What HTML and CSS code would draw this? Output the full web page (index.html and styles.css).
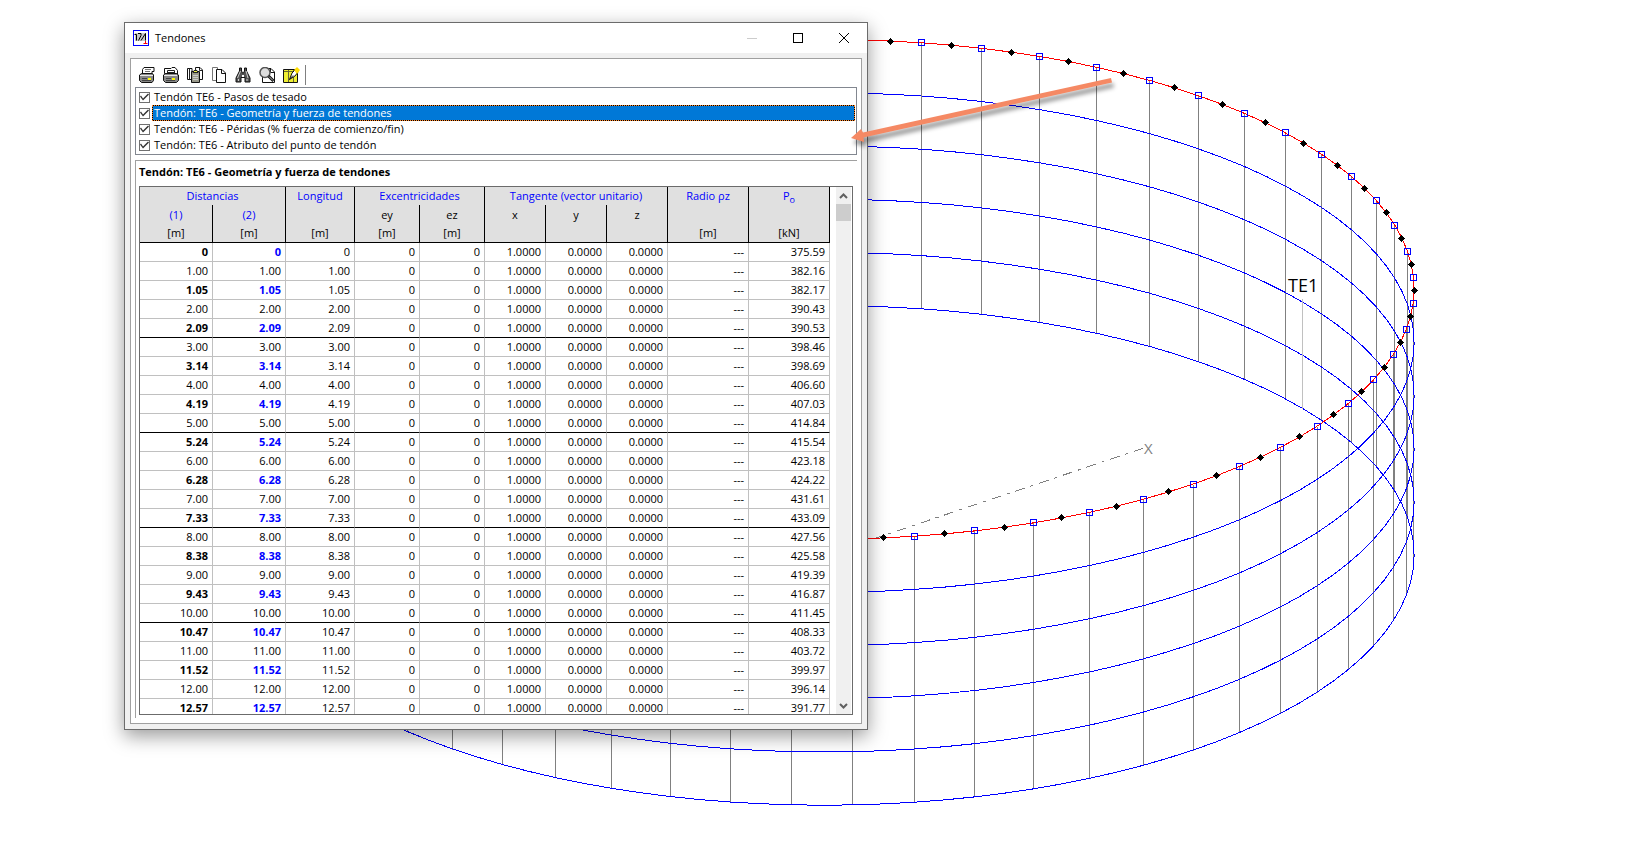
FILE: index.html
```
<!DOCTYPE html>
<html lang="es">
<head>
  <meta charset="UTF-8" />
  <meta name="viewport" content="width=device-width, initial-scale=1.0"/>
  <title>Tendones</title>
  <link rel="stylesheet" href="styles.css">
</head>
<body>
  <svg class="scene" role="img" aria-label="Modelo">
    <g id="posts" class="post"></g>
    <g id="rings" class="ring"></g>
    <line class="leader" x1="1302" y1="299" x2="1302" y2="409" />
    <line class="axis" x1="873" y1="539" x2="1147" y2="447" />
    <g id="tendon"></g>
    <text class="label" x="1288" y="292">TE1</text>
    <text class="axis-label" x="1144" y="454">X</text>
  </svg>

  <div class="window">
    <div class="titlebar">
      <svg width="16" height="16" viewBox="0 0 16 16">
        <rect x="0.5" y="0.5" width="15" height="15" fill="#fff" stroke="#00f" />
        <rect x="2" y="3" width="11" height="8" fill="#c8c8c8" />
        <path d="M1.500 4.500h2v6M5 3.500h3v2l-2.500 5M8 10.500L12.500 3.500v7" fill="none" stroke="#000" />
        <path d="M10.500 13.500h4M12.500 11v3" stroke="#f00" />
      </svg>
      <span class="title">Tendones</span>
      <button class="win-btn" aria-label="Minimizar"><svg width="10" height="10"><path d="M0 5.500h10" stroke="#ccc" /></svg></button>
      <button class="win-btn" aria-label="Maximizar"><svg width="10" height="10"><rect x="0.5" y="0.5" width="9" height="9" fill="none" stroke="#000" /></svg></button>
      <button class="win-btn" aria-label="Cerrar"><svg width="10" height="10"><path d="M0 0L10 10M10 0L0 10" stroke="#000" /></svg></button>
    </div>

    <div class="frame">
      <div class="toolbar">
        <button aria-label="Imprimir">
          <svg width="16" height="16" viewBox="0 0 16 16">
            <path d="M3.500 6.500V2.500L5 0.500H15V4.500H13V6.500z" fill="#fff" stroke="#111" />
            <path d="M6 2.500h6M6 4.500h5" stroke="#777" />
            <path d="M2.500 6.500H13.500L14.500 8V13.500L13 15.500H2.500L0.500 13.500V8z" fill="#888" stroke="#111" />
            <path d="M1 8.500h13" stroke="#e8e8e8" />
            <path d="M3 11.500h5M3 13.500h9" stroke="#444" />
            <path d="M9 11h3v2h-3z" fill="#ff0" />
          </svg>
        </button>
        <button aria-label="Imprimir tablas">
          <svg width="16" height="16" viewBox="0 0 16 16">
            <path d="M1.500 6.500V1.500H8L9 0.500H12L14.500 3.500V7z" fill="#fff" stroke="#111" />
            <path d="M4.500 6.500V3.500H11.500V6.500M5 5.500h6" fill="none" stroke="#222" />
            <path d="M2.500 6.500H13.500L15.500 8V13.500L13.500 15.500H2.500L0.500 13.500V8z" fill="#888" stroke="#111" />
            <path d="M1 8.500h13" stroke="#e8e8e8" />
            <path d="M3 11.500h5M3 13.500h9" stroke="#444" />
            <path d="M9 11h3v2h-3z" fill="#ff0" />
          </svg>
        </button>
        <button aria-label="Pegar">
          <svg width="16" height="16" viewBox="0 0 16 16">
            <path d="M0.500 1.500H5V12.500H0.500zM8.500 0.500H13L15.500 3V12.500H9z" fill="#fff" stroke="#111" />
            <path d="M2.500 1.500v11M12.500 1v2.500h3" fill="none" stroke="#222" />
            <path d="M4.500 4.500H12.500V15.500H4.500z" fill="#98988a" stroke="#111" />
            <path d="M6 5.500L7 3.500H10L11 5.500z" fill="#ee4" stroke="#222" />
            <path d="M6 8.500h5M6 10.500h5M6 12.500h5" stroke="#ccc" />
          </svg>
        </button>
        <button aria-label="Copiar">
          <svg width="16" height="16" viewBox="0 0 16 16">
            <path d="M1.500 0.500H6.500V13.500H1.500z" fill="#fff" stroke="#777" />
            <path d="M5.500 2.500H11L14.500 6V15.500H5.500z" fill="#fff" stroke="#111" />
            <path d="M10.500 3v3.500h4" fill="none" stroke="#111" />
          </svg>
        </button>
        <button aria-label="Buscar">
          <svg width="16" height="16" viewBox="0 0 16 16">
            <path d="M4.500 1h2v3L7.500 6h1L9.500 4V1h2v3L15 11v4h-5v-4.500H6V15H1v-4L4.500 4z" fill="#555" stroke="#111" />
            <path d="M5.500 4L2.500 11M11 4l2 7M3.500 12v2M12 12v2" stroke="#ccc" />
            <path d="M7 8h2v2H7z" fill="#fff" />
          </svg>
        </button>
        <button aria-label="Vista previa">
          <svg width="16" height="16" viewBox="0 0 16 16">
            <path d="M3.500 1.500H12L15.500 5V15.500H3.500z" fill="#fff" stroke="#111" />
            <path d="M11.500 2v3.500h4" fill="none" stroke="#111" />
            <circle cx="6" cy="5.500" r="5" fill="#ddd" stroke="#555" stroke-width="1.500" />
            <path d="M9.500 9L14.500 14" stroke="#111" stroke-width="3" />
            <path d="M10 9.500L14 13.500" stroke="#bbb" />
          </svg>
        </button>
        <button aria-label="Editar tabla">
          <svg width="18" height="16" viewBox="0 0 18 16">
            <path d="M1.500 2.500H15.500V15.500H1.500z" fill="#ee3" stroke="#111" />
            <path d="M2 4.500h13M6.500 3v12M11.500 3v12" stroke="#663" />
            <path d="M7.500 12.500L10 6L14 2L16 5L13 9z" fill="#fff" stroke="#111" />
            <path d="M12 3L15 0L18 3L15 7z" fill="#fd0" />
            <path d="M7.500 12.500L11 8.500" stroke="#111" />
          </svg>
        </button>
        <span class="separator"></span>
      </div>

      <div class="list">
        <label><input type="checkbox" checked /><span>Tendón TE6 - Pasos de tesado</span></label>
        <label class="selected"><input type="checkbox" checked /><span>Tendón: TE6 - Geometría y fuerza de tendones</span></label>
        <label><input type="checkbox" checked /><span>Tendón: TE6 - Péridas (% fuerza de comienzo/fin)</span></label>
        <label><input type="checkbox" checked /><span>Tendón: TE6 - Atributo del punto de tendón</span></label>
      </div>

      <div class="panel">
        <h2>Tendón: TE6 - Geometría y fuerza de tendones</h2>
        <div class="grid">
          <table>
            <colgroup>
              <col class="c-dist"><col class="c-dist"><col class="c-len"><col class="c-exc"><col class="c-exc">
              <col class="c-tan"><col class="c-tan"><col class="c-tan"><col class="c-val"><col class="c-val">
            </colgroup>
            <thead>
              <tr class="groups">
                <th colspan="2">Distancias</th><th>Longitud</th><th colspan="2">Excentricidades</th>
                <th colspan="3">Tangente (vector unitario)</th><th>Radio ρz</th><th>P<sub>o</sub></th>
              </tr>
              <tr class="parts">
                <th class="blue">(1)</th><th class="blue">(2)</th><th></th><th>ey</th><th>ez</th>
                <th>x</th><th>y</th><th>z</th><th></th><th></th>
              </tr>
              <tr class="units">
                <th>[m]</th><th>[m]</th><th>[m]</th><th>[m]</th><th>[m]</th>
                <th></th><th></th><th></th><th>[m]</th><th>[kN]</th>
              </tr>
            </thead>
            <tbody id="rows"></tbody>
          </table>
          <div class="scrollbar">
            <button aria-label="Subir"><svg width="9" height="6"><path d="M1 5L4.500 1.500L8 5" /></svg></button>
            <div class="thumb"></div>
            <button class="down" aria-label="Bajar"><svg width="9" height="6"><path d="M1 1L4.500 4.500L8 1" /></svg></button>
          </div>
        </div>
      </div>
    </div>
  </div>

  <svg class="arrow" width="280" height="90" viewBox="840 65 280 90">
    <path d="M1111 78L863 132.500L861 129L851 138L864 142L863.500 137.500L1112 82.500z" />
  </svg>

  <script src="script.js"></script>
</body>
</html>
```
FILE: styles.css
```
* {
  box-sizing: border-box;
}

body {
  margin: 0;
  height: 100vh;
  overflow: hidden;
  position: relative;
  background: #fff;
  color: #000;
  font-family: 'Segoe UI', 'Open Sans', sans-serif;
  font-size: 11px;
}

button {
  display: flex;
  align-items: center;
  justify-content: center;
  border: none;
  background: none;
  padding: 0;
}

/* model view */
.scene {
  position: absolute;
  inset: 0;
  width: 100%;
  height: 100%;
  shape-rendering: crispEdges;
}

.post {
  stroke: #808080;
}

.ring {
  stroke: #00f;
  fill: none;
}

.tendon {
  stroke: #f00;
  fill: none;
}

.node {
  stroke: #00f;
  fill: none;
}

.leader {
  stroke: #c0c0c0;
}

.axis {
  stroke: #808080;
  stroke-dasharray: 10 6 3 6;
}

.label {
  font-size: 18px;
}

.axis-label {
  font-size: 15px;
  fill: #808080;
}

.arrow {
  position: absolute;
  left: 840px;
  top: 65px;
  fill: #f58964;
  filter: drop-shadow(2px 5px 2px rgba(0, 0, 0, 0.4));
}

/* dialog */
.window {
  position: absolute;
  left: 124px;
  right: 782px;
  top: 22px;
  bottom: 114px;
  display: flex;
  flex-direction: column;
  border: 1px solid #6b6b6b;
  background: #f0f0f0;
  box-shadow: 0 6px 18px rgba(0, 0, 0, 0.4);
}

.titlebar {
  display: flex;
  align-items: center;
  height: 30px;
  padding-left: 8px;
  background: #fff;
}

.title {
  flex: 1;
  padding: 0 0 2px 6px;
}

.win-btn {
  width: 46px;
  height: 28px;
}

.frame {
  flex: 1;
  min-height: 0;
  display: flex;
  flex-direction: column;
  margin: 5px;
  padding: 4px 4px 5px;
  border: 1px solid #a0a0a0;
  background: #fff;
}

.toolbar {
  display: flex;
  align-items: center;
  height: 24px;
}

.toolbar button {
  width: 24px;
  height: 24px;
}

.separator {
  width: 1px;
  height: 20px;
  margin-left: 2px;
  background: #808080;
}

.list {
  padding: 1px;
  border: 1px solid #828790;
}

.list label {
  display: flex;
  align-items: center;
  height: 16px;
  padding-left: 2px;
}

.list input {
  appearance: none;
  width: 11px;
  height: 11px;
  margin: 0 2px 0 0;
  border: 1px solid #707070;
}

.list input:checked::before {
  content: "";
  display: block;
  height: 9px;
  background: #333;
  clip-path: polygon(0 4px, 1px 3px, 3px 6px, 8px 1px, 9px 2px, 3px 8px);
}

.list span {
  flex: 1;
  height: 16px;
  line-height: 13px;
  padding-left: 1px;
  border: 1px solid transparent;
}

.list .selected span {
  background: linear-gradient(#0078d7, #0078d7) padding-box, #000 border-box;
  color: #fff;
  border: 1px dotted #ff8728;
}

.panel {
  flex: 1;
  min-height: 0;
  display: flex;
  flex-direction: column;
  margin-top: 5px;
  padding: 0 4px 3px 3px;
  border-top: 1px solid #a0a0a0;
  border-left: 1px solid #a0a0a0;
}

h2 {
  margin: 0 0 4px;
  font-size: 11px;
  font-weight: bold;
  line-height: 21px;
}

.grid {
  flex: 1;
  min-height: 0;
  display: flex;
  align-items: flex-start;
  overflow: hidden;
  border: 1px solid #6b6b6b;
}

table {
  flex: 1;
  table-layout: fixed;
  border-collapse: separate;
  border-spacing: 0;
}

.c-dist { width: 73px; }
.c-len { width: 69px; }
.c-exc { width: 65px; }
.c-tan { width: 61px; }
.c-val { width: 81px; }

th {
  height: 19px;
  padding: 0;
  background: #e0e0e0;
  border-right: 1px solid #000;
  font-weight: normal;
  line-height: 18px;
  vertical-align: top;
}

.groups th {
  height: 18px;
}

.parts th {
  padding-top: 1px;
}

.units th {
  border-bottom: 1px solid #000;
}

.groups,
.blue {
  color: #00f;
}

sub {
  font-size: 9px;
  line-height: 0;
}

td {
  height: 19px;
  padding: 0 4px 0 0;
  border-right: 1px solid #c0c0c0;
  border-bottom: 1px solid #c0c0c0;
  line-height: 18px;
  text-align: right;
}

.main td:nth-child(-n+2) {
  font-weight: bold;
}

.main td:nth-child(2) {
  color: #00f;
}

tr:nth-child(5n) td {
  border-bottom-color: #000;
}

.scrollbar {
  align-self: stretch;
  display: flex;
  flex-direction: column;
  width: 15px;
  margin: 0 1px 0 6px;
  background: #f0f0f0;
}

.scrollbar button {
  height: 17px;
}

.scrollbar path {
  fill: none;
  stroke: #606060;
  stroke-width: 2;
}

.thumb {
  height: 17px;
  background: #cdcdcd;
}

.down {
  margin-top: auto;
}
```
FILE: script.js
```
// distance along the tendon [m] and prestressing force P0 [kN]
const steps = [
  ['0', '375.59'], ['1.00', '382.16'], ['1.05', '382.17'], ['2.00', '390.43'], ['2.09', '390.53'],
  ['3.00', '398.46'], ['3.14', '398.69'], ['4.00', '406.60'], ['4.19', '407.03'], ['5.00', '414.84'],
  ['5.24', '415.54'], ['6.00', '423.18'], ['6.28', '424.22'], ['7.00', '431.61'], ['7.33', '433.09'],
  ['8.00', '427.56'], ['8.38', '425.58'], ['9.00', '419.39'], ['9.43', '416.87'], ['10.00', '411.45'],
  ['10.47', '408.33'], ['11.00', '403.72'], ['11.52', '399.97'], ['12.00', '396.14'], ['12.57', '391.77']
];

document.getElementById('rows').innerHTML = steps.map(([d, force], i) => {
  const cells = [d, d, d, '0', '0', '1.0000', '0.0000', '0.0000', '---', force];
  const main = i % 2 === 0 ? ' class="main"' : '';
  return `<tr${main}>${cells.map(c => `<td>${c}</td>`).join('')}</tr>`;
}).join('');

// cylinder: 60 nodes round the ring, 5 levels below the tendon
const CX = 825.8, CY = 289.4, RX = 588.3, RY = 249.8;
const START = 8.65, LEVEL = 53.2, LEVELS = 5;

function point(deg) {
  const a = deg * Math.PI / 180;
  return [CX + RX * Math.sin(a), CY + RY * Math.cos(a + 0.003)];
}

function ring(level) {
  const pts = [];
  for (let i = 0; i < 120; i++) {
    const [x, y] = point(START + i * 3);
    pts.push(`${x.toFixed(1)},${(y + level * LEVEL).toFixed(1)}`);
  }
  return `<polygon points="${pts.join(' ')}" />`;
}

let rings = '';
for (let l = 1; l <= LEVELS; l++) rings += ring(l);

let posts = '';
let nodes = '';
for (let i = 0; i < 60; i++) {
  const [x, y] = point(START + i * 6).map(v => Math.floor(v) + 0.5);
  posts += `<line x1="${x}" y1="${y}" x2="${x}" y2="${y + LEVEL * LEVELS}" />`;
  nodes += `<rect class="node" x="${x - 3}" y="${y - 3}" width="6" height="6" />`;

  const [mx, my] = point(START + i * 6 + 3).map(v => Math.floor(v) + 0.5);
  nodes += `<path d="M${mx - 3.5} ${my}L${mx} ${my - 3.5}L${mx + 3.5} ${my}L${mx} ${my + 3.5}z" />`;
}

document.getElementById('rings').innerHTML = rings;
document.getElementById('posts').innerHTML = posts;
document.getElementById('tendon').innerHTML = `<g class="tendon">${ring(0)}</g>${nodes}`;
```
